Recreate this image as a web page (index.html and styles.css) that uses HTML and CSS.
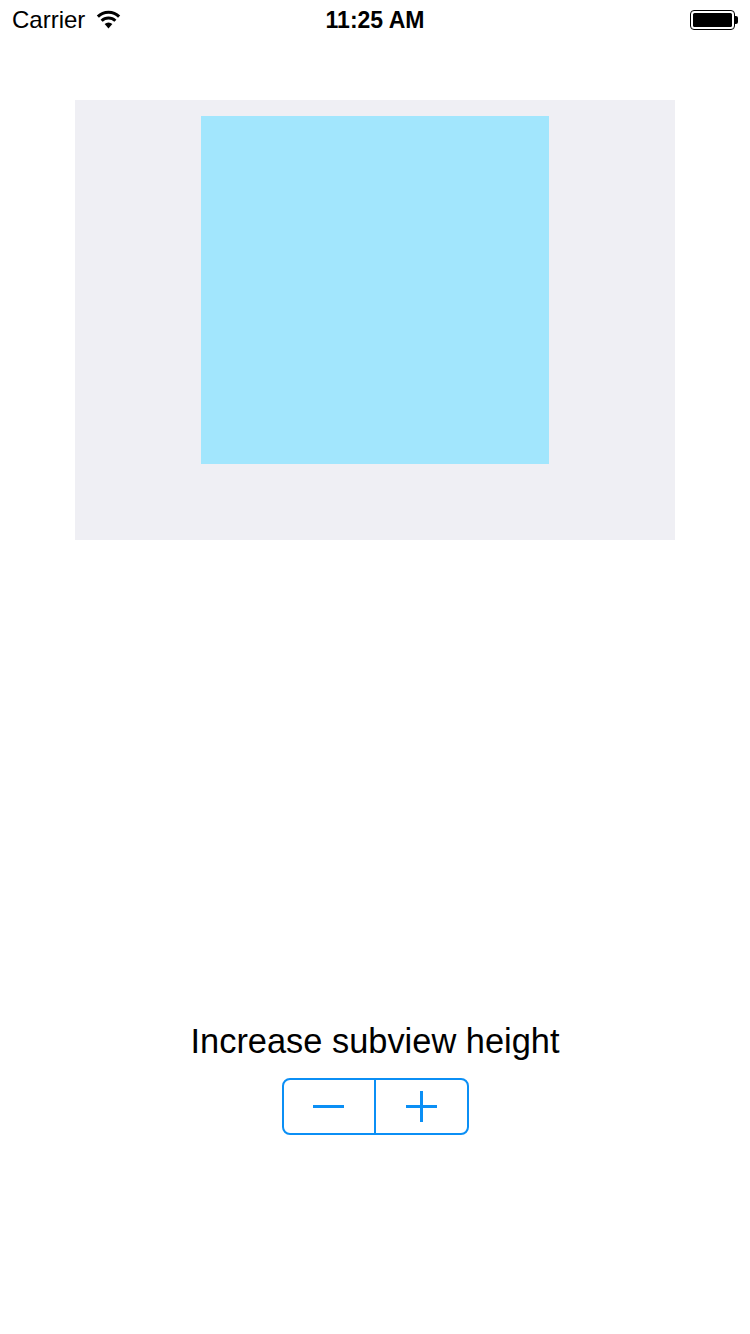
FILE: index.html
```html
<!DOCTYPE html>
<html>
<head>
<meta charset="utf-8">
<link rel="stylesheet" href="styles.css">
</head>
<body>
<div class="screen">
  <div class="status-bar">
    <div class="status-left">
      <span class="carrier">Carrier</span>
      <svg class="wifi" width="25" height="19" viewBox="0 0 24 18">
        <path d="M12 17.6 L8.3 13.4 A5.3 5.3 0 0 1 15.7 13.4 Z" fill="#000"/>
        <path d="M5.4 10.2 A9.4 9.4 0 0 1 18.6 10.2" fill="none" stroke="#000" stroke-width="2.9"/>
        <path d="M1.8 6.3 A14.4 14.4 0 0 1 22.2 6.3" fill="none" stroke="#000" stroke-width="2.9"/>
      </svg>
    </div>
    <div class="time">11:25 AM</div>
    <div class="status-right">
      <div class="battery"><div class="battery-fill"></div></div>
      <div class="battery-tip"></div>
    </div>
  </div>
  <div class="container">
    <div class="subview"></div>
  </div>
  <div class="controls">
    <div class="label">Increase subview height</div>
    <div class="stepper">
      <div class="step minus"><span class="hbar"></span></div>
      <div class="divider"></div>
      <div class="step plus"><span class="hbar"></span><span class="vbar"></span></div>
    </div>
  </div>
</div>
</body>
</html>
```
FILE: styles.css
```css
html, body {
  margin: 0;
  padding: 0;
  background: #fff;
}
.screen {
  width: 750px;
  height: 1334px;
  display: flex;
  flex-direction: column;
  align-items: center;
  font-family: "Liberation Sans", Arial, sans-serif;
  color: #000;
}
.status-bar {
  width: 750px;
  height: 40px;
  position: relative;
  display: flex;
  align-items: center;
  justify-content: space-between;
  box-sizing: border-box;
  padding: 0 12px 0 12px;
}
.status-left {
  display: flex;
  align-items: center;
  gap: 11px;
}
.carrier {
  font-size: 24px;
  line-height: 40px;
}
.wifi {
  margin-top: -1px;
}
.time {
  position: absolute;
  left: 0;
  right: 0;
  text-align: center;
  font-size: 23px;
  font-weight: bold;
  line-height: 40px;
  pointer-events: none;
}
.status-right {
  display: flex;
  align-items: center;
}
.battery {
  width: 45px;
  height: 20px;
  box-sizing: border-box;
  border: 1.5px solid #000;
  border-radius: 4px;
  padding: 2px;
}
.battery-fill {
  width: 100%;
  height: 100%;
  background: #000;
  border-radius: 1.5px;
}
.battery-tip {
  width: 3px;
  height: 8px;
  background: #000;
  border-radius: 0 2px 2px 0;
}
.container {
  margin-top: 60px;
  width: 600px;
  height: 440px;
  background: #efeff4;
  display: flex;
  justify-content: center;
  align-items: flex-start;
  padding-top: 16px;
  box-sizing: border-box;
}
.subview {
  width: 348px;
  height: 348px;
  background: #a2e6fd;
}
.controls {
  margin-top: 481px;
  display: flex;
  flex-direction: column;
  align-items: center;
}
.label {
  font-size: 34.4px;
  line-height: 40px;
}
.stepper {
  margin-top: 17px;
  width: 187px;
  height: 57px;
  box-sizing: border-box;
  border: 2px solid #0b8ff5;
  border-radius: 8px;
  display: flex;
}
.step {
  flex: 1;
  position: relative;
}
.divider {
  width: 2px;
  background: #0b8ff5;
}
.hbar {
  position: absolute;
  left: 50%;
  top: 50%;
  width: 31px;
  height: 3px;
  margin-left: -15.5px;
  margin-top: -1.5px;
  background: #0b8ff5;
}
.vbar {
  position: absolute;
  left: 50%;
  top: 50%;
  width: 3px;
  height: 31px;
  margin-left: -1.5px;
  margin-top: -15.5px;
  background: #0b8ff5;
}
```
